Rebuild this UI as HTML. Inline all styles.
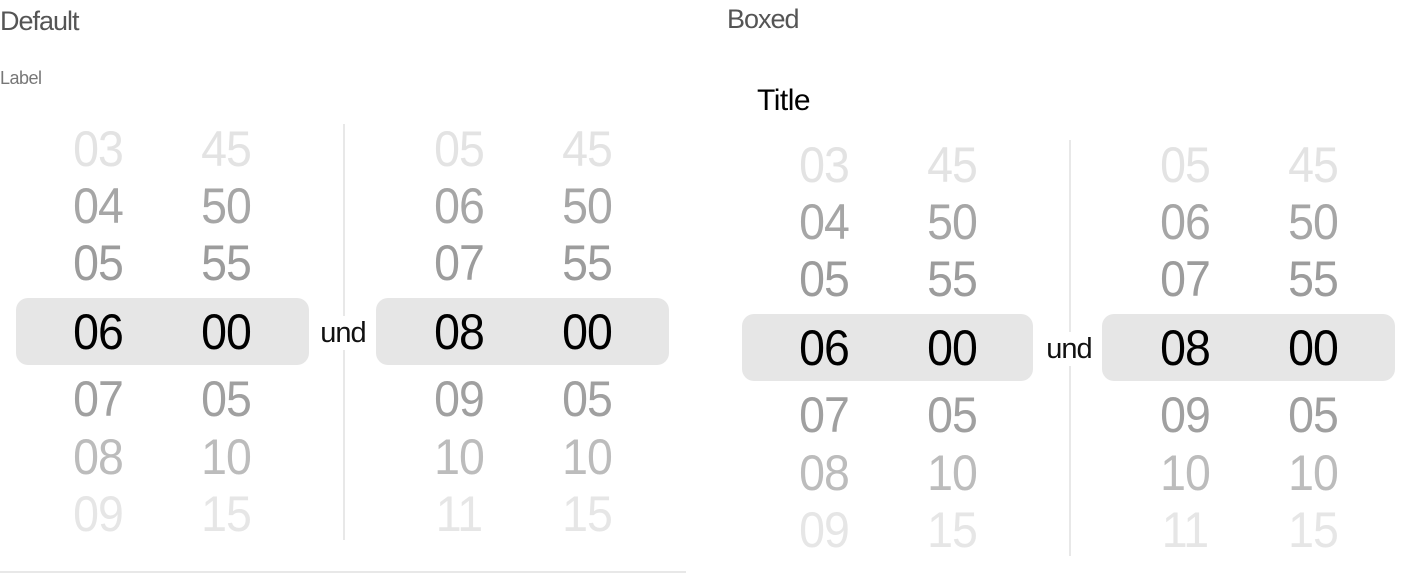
<!DOCTYPE html>
<html><head><meta charset="utf-8"><style>
*{margin:0;padding:0;box-sizing:border-box}
body{width:1412px;height:573px;background:#fff;font-family:"Liberation Sans",Arial,sans-serif;position:relative;overflow:hidden}
.a{position:absolute}
.h{color:#555;font-size:27px;letter-spacing:-1px}
.p{position:absolute;width:680px;height:420px}
.box{position:absolute;top:178px;height:67px;width:293px;background:#e6e6e6;border-radius:12px}
.col{position:absolute;top:0;width:90px;height:420px;text-align:center;font-size:50px;letter-spacing:-1px}
.col div{position:absolute;left:0;width:90px;height:56px;line-height:56px;transform:scaleX(.93)}
.r0{top:1px;color:#e3e3e3}
.r1{top:58px;color:#a6a6a6}
.r2{top:115px;color:#9c9c9c}
.r3{top:184px;color:#000}
.r4{top:251px;color:#a0a0a0}
.r5{top:309px;color:#bcbcbc}
.r6{top:366px;color:#e6e6e6}
.div{position:absolute;left:327px;top:4px;width:2px;height:416px;background:#e8e8e8}
.und{position:absolute;left:298px;top:196px;width:58px;text-align:center;font-size:29px;line-height:34px;color:#111;letter-spacing:-1px;background:#fff}
</style></head><body>
<div class="a h" style="left:0;top:6px">Default</div>
<div class="a" style="left:0;top:68px;font-size:18px;color:#777;letter-spacing:-0.5px">Label</div>
<div class="a h" style="left:727px;top:4px">Boxed</div>
<div class="a" style="left:757px;top:84px;font-size:30px;color:#000;letter-spacing:-0.5px">Title</div>
<div class="a" style="left:0;top:571px;width:686px;height:2px;background:#e8e8e8"></div>

<div class="p" style="left:16px;top:120px">
 <div class="div"></div>
 <div class="box" style="left:0"></div>
 <div class="box" style="left:360px"></div>
 <div class="und">und</div>
 <div class="col" style="left:37px"><div class="r0">03</div><div class="r1">04</div><div class="r2">05</div><div class="r3">06</div><div class="r4">07</div><div class="r5">08</div><div class="r6">09</div></div>
 <div class="col" style="left:165px"><div class="r0">45</div><div class="r1">50</div><div class="r2">55</div><div class="r3">00</div><div class="r4">05</div><div class="r5">10</div><div class="r6">15</div></div>
 <div class="col" style="left:398px"><div class="r0">05</div><div class="r1">06</div><div class="r2">07</div><div class="r3">08</div><div class="r4">09</div><div class="r5">10</div><div class="r6">11</div></div>
 <div class="col" style="left:526px"><div class="r0">45</div><div class="r1">50</div><div class="r2">55</div><div class="r3">00</div><div class="r4">05</div><div class="r5">10</div><div class="r6">15</div></div>
</div>

<div class="p" style="left:742px;top:136px">
 <div class="div"></div>
 <div class="box" style="left:0;width:291px"></div>
 <div class="box" style="left:360px"></div>
 <div class="und">und</div>
 <div class="col" style="left:37px"><div class="r0">03</div><div class="r1">04</div><div class="r2">05</div><div class="r3">06</div><div class="r4">07</div><div class="r5">08</div><div class="r6">09</div></div>
 <div class="col" style="left:165px"><div class="r0">45</div><div class="r1">50</div><div class="r2">55</div><div class="r3">00</div><div class="r4">05</div><div class="r5">10</div><div class="r6">15</div></div>
 <div class="col" style="left:398px"><div class="r0">05</div><div class="r1">06</div><div class="r2">07</div><div class="r3">08</div><div class="r4">09</div><div class="r5">10</div><div class="r6">11</div></div>
 <div class="col" style="left:526px"><div class="r0">45</div><div class="r1">50</div><div class="r2">55</div><div class="r3">00</div><div class="r4">05</div><div class="r5">10</div><div class="r6">15</div></div>
</div>
</body></html>
